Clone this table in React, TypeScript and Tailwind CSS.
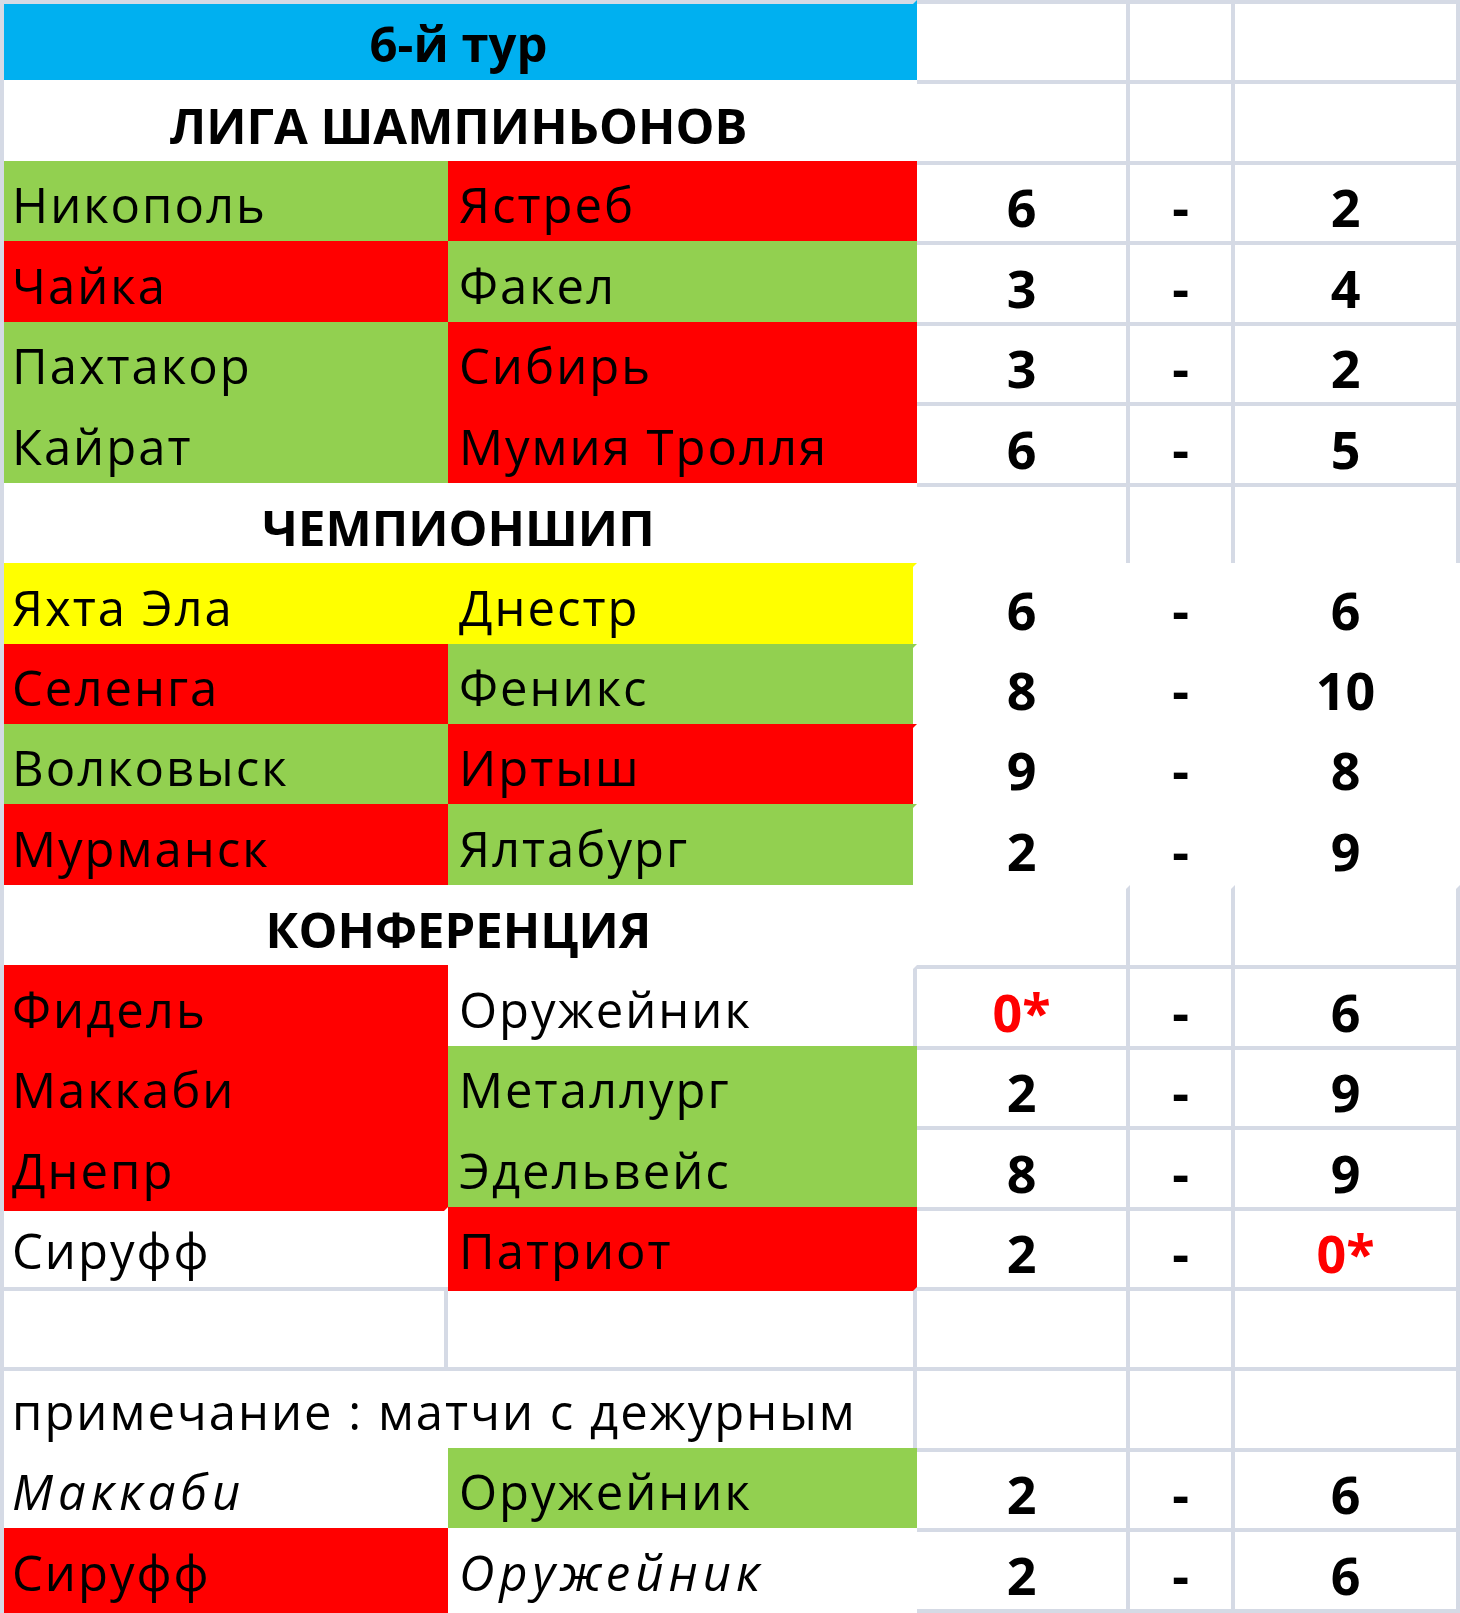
import React from 'react';

type Fill = 'w' | 'b' | 'gr' | 'r' | 'y';
type Line = Fill | 'g';
type Kind = 'title' | 'head' | 'name' | 'namei' | 'score' | 'scoreRed' | 'blank';

// [text, fill, top line, right line, kind, span]
type Cell = [string, Fill, Line, Line, Kind, number?];

const BG: Record<Fill, string> = {
  w: 'bg-white',
  b: 'bg-[#00b0f0]',
  gr: 'bg-[#92d050]',
  r: 'bg-[#ff0000]',
  y: 'bg-[#ffff00]',
};

const TOP: Record<Line, string> = {
  g: 'border-t-[#d5dae5]',
  w: 'border-t-white',
  b: 'border-t-[#00b0f0]',
  gr: 'border-t-[#92d050]',
  r: 'border-t-[#ff0000]',
  y: 'border-t-[#ffff00]',
};

const RIGHT: Record<Line, string> = {
  g: 'border-r-[#d5dae5]',
  w: 'border-r-white',
  b: 'border-r-[#00b0f0]',
  gr: 'border-r-[#92d050]',
  r: 'border-r-[#ff0000]',
  y: 'border-r-[#ffff00]',
};

const KIND: Record<Kind, string> = {
  title: 'justify-center pb-[12px] text-[49px] font-bold text-black',
  head: 'justify-center pb-[11px] text-[49px] font-bold text-black',
  name: 'justify-start pb-[12px] text-[49px] tracking-[2px] text-black',
  namei: 'justify-start pb-[12px] text-[49px] tracking-[5px] italic text-black',
  score: 'justify-center pb-[8px] text-[52px] font-bold text-black',
  scoreRed: 'justify-center pb-[8px] text-[52px] font-bold text-[#ff0000]',
  blank: '',
};

const empty = (t: Line = 'g', r: Line = 'g'): Cell => ['', 'w', t, r, 'blank'];
const score = (a: string, b: string, t: Line = 'g', r: Line = 'g'): Cell[] => [
  [a, 'w', t, r, a.includes('*') ? 'scoreRed' : 'score'],
  ['-', 'w', t, r, 'score'],
  [b, 'w', t, r, b.includes('*') ? 'scoreRed' : 'score'],
];
const team = (text: string, fill: Fill, right?: Line): Cell => [text, fill, fill, right ?? fill, 'name'];

const rows: Cell[][] = [
  [['6-й тур', 'b', 'g', 'b', 'title', 2], empty(), empty(), empty()],
  [['ЛИГА ШАМПИНЬОНОВ', 'w', 'w', 'w', 'head', 2], empty(), empty(), empty()],
  [team('Никополь', 'gr'), team('Ястреб', 'r'), ...score('6', '2')],
  [team('Чайка', 'r'), team('Факел', 'gr'), ...score('3', '4')],
  [team('Пахтакор', 'gr'), team('Сибирь', 'r'), ...score('3', '2')],
  [team('Кайрат', 'gr'), team('Мумия Тролля', 'r'), ...score('6', '5')],
  [['ЧЕМПИОНШИП', 'w', 'w', 'w', 'head', 2], empty(), empty(), empty()],
  [team('Яхта Эла', 'y'), team('Днестр', 'y', 'w'), ...score('6', '6', 'w', 'w')],
  [team('Селенга', 'r'), team('Феникс', 'gr', 'w'), ...score('8', '10', 'w', 'w')],
  [team('Волковыск', 'gr'), team('Иртыш', 'r', 'w'), ...score('9', '8', 'w', 'w')],
  [team('Мурманск', 'r'), team('Ялтабург', 'gr', 'w'), ...score('2', '9', 'w', 'w')],
  [['КОНФЕРЕНЦИЯ', 'w', 'w', 'w', 'head', 2], empty('w'), empty('w'), empty('w')],
  [team('Фидель', 'r'), ['Оружейник', 'w', 'w', 'g', 'name'], ...score('0*', '6')],
  [team('Маккаби', 'r'), team('Металлург', 'gr'), ...score('2', '9')],
  [team('Днепр', 'r'), team('Эдельвейс', 'gr'), ...score('8', '9')],
  [['Сируфф', 'w', 'r', 'w', 'name'], team('Патриот', 'r'), ...score('2', '0*')],
  [empty('g', 'g'), empty('r', 'g'), empty(), empty(), empty()],
  [['примечание : матчи с дежурным', 'w', 'g', 'g', 'name', 2], empty(), empty(), empty()],
  [['Маккаби', 'w', 'w', 'w', 'namei'], team('Оружейник', 'gr'), ...score('2', '6')],
  [team('Сируфф', 'r'), ['Оружейник', 'w', 'w', 'w', 'namei'], ...score('2', '6')],
];

function SheetCell({ cell, col }: { cell: Cell; col: number }) {
  const [text, fill, top, right, kind, span] = cell;
  const indent = kind === 'name' || kind === 'namei' ? (col === 0 ? 'pl-[8px]' : 'pl-[11px]') : '';
  return (
    <div
      className={`flex items-end whitespace-nowrap border-t-4 border-r-4 leading-none ${BG[fill]} ${TOP[top]} ${RIGHT[right]} ${KIND[kind]} ${indent} ${span === 2 ? 'col-span-2' : ''}`}
    >
      {text}
    </div>
  );
}

export default function App() {
  return (
    <div className="w-[1460px] h-[1613px] bg-white font-['Open_Sans',sans-serif]">
      <div className="grid grid-cols-[444px_469px_213px_105px_225px] grid-rows-[repeat(20,80.45px)_4px] border-l-4 border-l-[#d5dae5]">
        {rows.map((row, ri) => {
          let col = 0;
          return row.map((cell, ci) => {
            const c = col;
            col += cell[5] ?? 1;
            return <SheetCell key={`${ri}-${ci}`} cell={cell} col={c} />;
          });
        })}
        {/* bottom edge of the last row */}
        <div className="bg-[#ff0000]" />
        <div className="bg-white" />
        <div className="bg-[#d5dae5]" />
        <div className="bg-[#d5dae5]" />
        <div className="bg-[#d5dae5]" />
      </div>
    </div>
  );
}
